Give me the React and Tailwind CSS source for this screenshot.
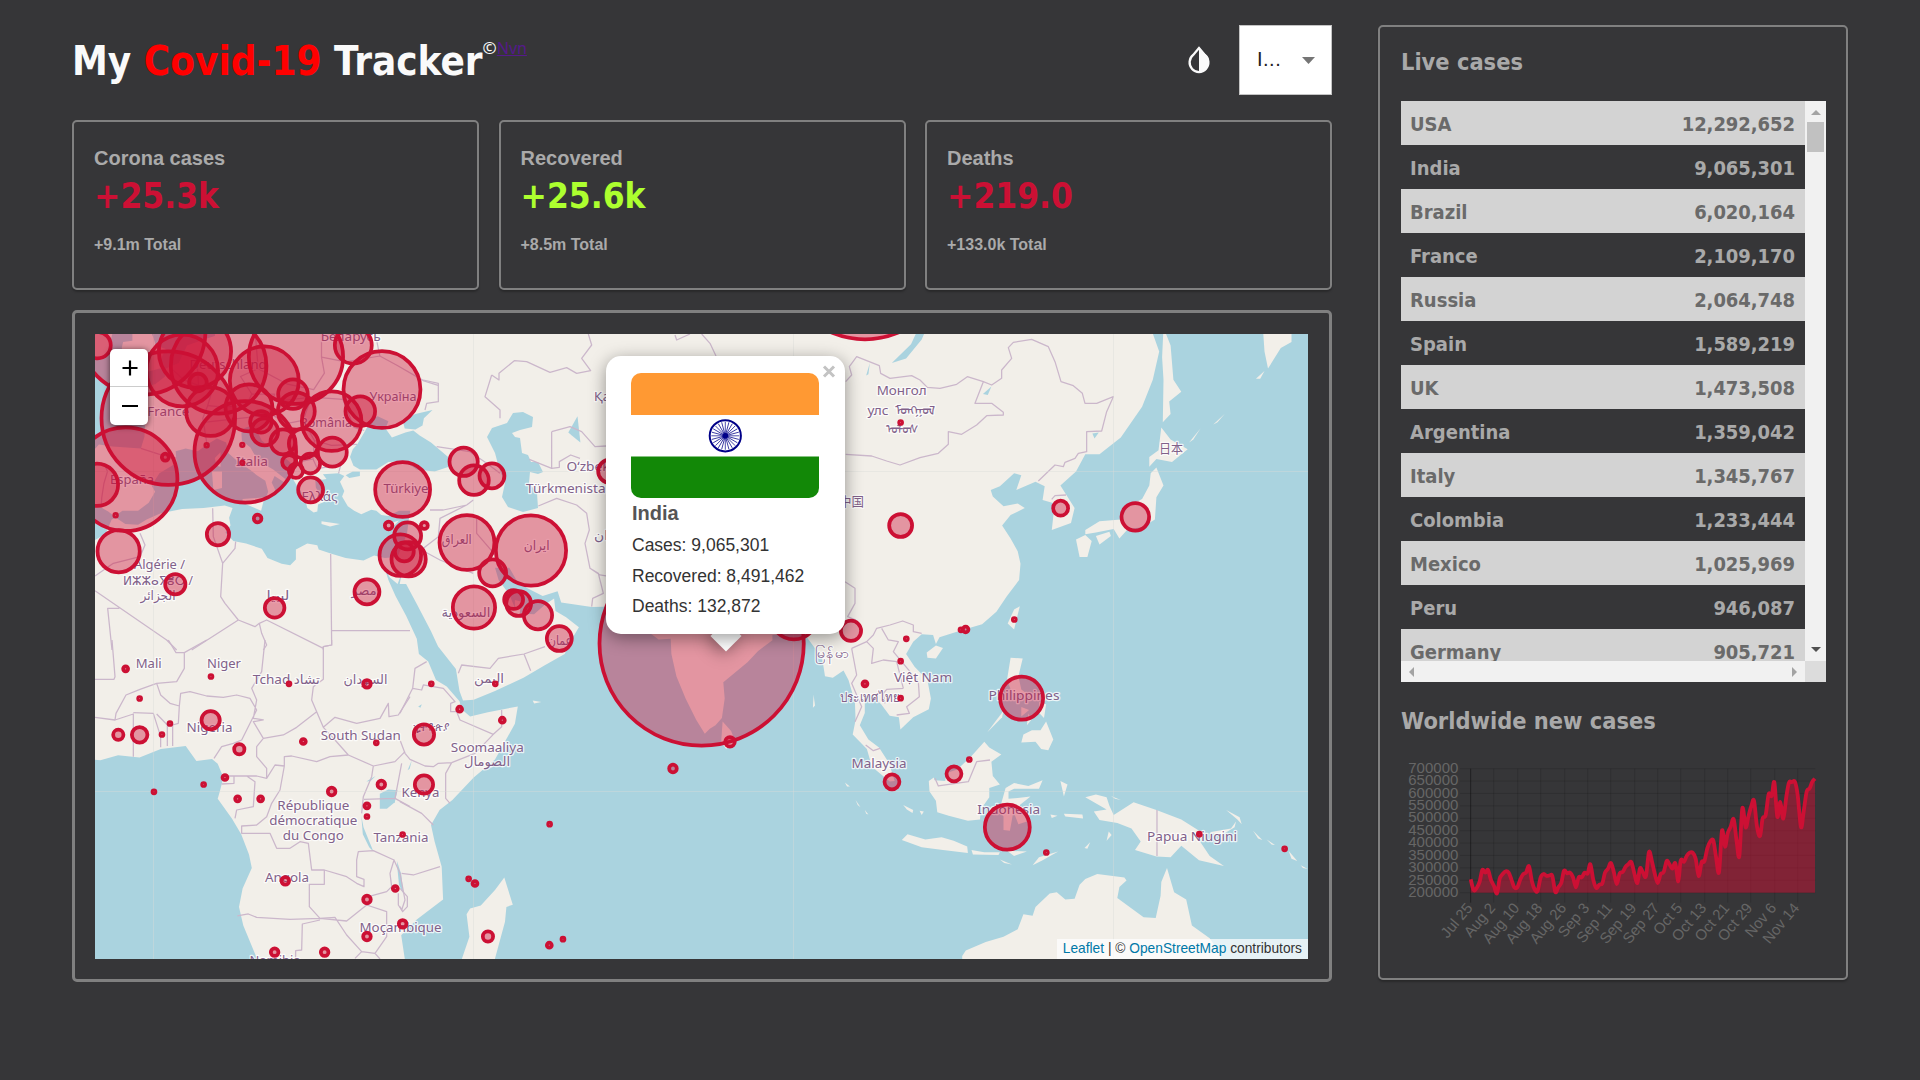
import React from "react";

/* ---------- map projection (web mercator, 320px tiles) ---------- */
const px = (lon) => 153.7 + 7.1111 * lon;
const py = (lat) => 791.6 - 407.44 * Math.log(Math.tan(Math.PI / 4 + (lat * Math.PI) / 360));

const geoPath = (s, close = true) =>
  s
    .trim()
    .split(/\s+/)
    .map((p, i) => {
      const [lon, lat] = p.split(",").map(Number);
      return (i ? "L" : "M") + px(lon).toFixed(1) + " " + py(lat).toFixed(1);
    })
    .join("") + (close ? "Z" : "");

const WATER = [
  // Atlantic, Biscay, Channel, North Sea
  "-12,56 -12,43.1 -9,43.1 -8.2,43.4 -7.7,43.8 -5.8,43.6 -3.8,43.5 -1.8,43.4 -1.3,44.6 -1.2,46.1 -2.5,47.3 -4.7,47.9 -4.7,48.5 -3,48.8 -1.6,48.7 -1.8,49.7 -1.2,49.4 0.2,49.6 1.6,50.3 1.7,51 3.5,51.5 4.7,53 7,53.5 8.6,53.8 8.8,56",
  // Gulf of Cadiz
  "-12,37 -9,37.1 -7.5,37.1 -6.4,36.6 -5.4,36 -5.3,35.9 -5.9,35.7 -6.8,34 -8.5,33.2 -12,33",
  // Mediterranean
  "-5.6,36 -4.4,36.7 -2.2,36.7 -0.7,37.6 0.2,38.8 -0.3,39.5 0.8,40.8 3.2,41.9 3.1,43.1 4.5,43.4 6.2,43.1 7.5,43.8 8.9,44.4 10.2,44 10.5,42.9 12.2,41.8 13.5,41.2 14.5,40.6 15.7,40 16.1,38.8 15.7,38 16.5,38.4 17.1,39 16.6,39.8 17,40.5 18.4,39.8 18.5,40.2 16.8,41.2 15.9,41.6 16.1,41.9 14.7,42.1 13.6,43.5 12.4,44.2 12.3,45.3 13.7,45.7 13.6,45 14.5,45.2 15.2,44.2 16.5,43.4 18.5,42.4 19.4,41.8 19.4,40.4 20.2,39.4 21.2,38.3 21.6,37 22.5,36.5 23,36.6 23.1,37.4 24,37.7 23.1,38.8 22.8,39.3 22.7,40.4 23.7,40.1 24.3,40.2 23.8,40.7 26,40.8 26.8,40.5 26.2,39.9 26.8,38.9 26.5,38.3 27.3,37.2 28.2,36.7 29.2,36.3 30.6,36.8 31.3,36.7 32,36.2 33,36.1 34.5,36.7 36.1,36.7 35.9,35.8 35.6,34 35,32.8 34.3,31.3 32.5,31.2 31,31.5 29.5,30.9 27,31.2 25,31.7 23.2,32.2 23,32.7 21.6,32.9 20,32.2 20,31 19.2,30.3 18,30.5 16,31.2 15.2,32.3 13,32.9 11.2,33.2 10.1,34.2 10.8,35 10.6,35.9 11.1,37 10,37.3 7,37 4,36.9 1,36.4 -1,35.7 -2.2,35.1 -4,35.2 -5.3,35.9",
  // Black Sea, Azov, Marmara
  "28.1,41.6 27.6,42.5 28,43.3 28.6,43.8 29.6,45 30.7,46.4 31.5,46.6 33,46.1 32.6,45.4 33.5,44.5 35.4,45 36.5,45.2 37.4,44.7 39,44 41.4,42.5 41.5,41.5 39.5,41 37,41.2 36,41.7 35,42.1 33,42 31.3,41.2 29,41.2",
  "35,46.2 36.8,46.8 39.2,47.2 38,46.4 37.8,45.7 36.8,45.3 35.3,45.4",
  "27,40.6 28,41 29,41 29,40.5 27.5,40.3",
  // Gulf of Guinea and South Atlantic
  "-12,4.9 -9,4.7 -8.3,4.5 -7.5,4.4 -5,5.1 -2,4.8 1,6 4.5,6.4 6,4.3 8.2,4.6 9,3.9 9.8,2 9.3,0 9,-1 11,-3.8 12.3,-6 13.4,-8.8 13.8,-10.7 12.5,-13.5 12,-16 12.6,-18.5 14.5,-22.8 15,-27 -12,-27",
  // Indian and Pacific Oceans with the Red Sea and the Gulf
  "32.5,29.9 33,28.5 34,26.5 35.5,24 37,21 37.3,19 38.6,18 39.7,15.5 41.2,14.6 43,12.6 43.3,11.5 44.5,10.5 47,11.1 51.2,11.9 50.8,9.5 48,4.5 45,2 42,-1.2 40.2,-2.6 39,-4.7 39.5,-7 40.5,-10.5 40.7,-15 37,-17.7 34.8,-19.8 35.5,-24 35,-40 165,-40 165,56 139,56 140.5,54 141.4,52.5 140.5,50 139,47.5 136,44.5 133,42.8 131,42.8 129.7,41 127.5,39.5 129.5,37 129,35.3 126.3,34.5 126.7,37.5 125,37.9 125.3,39.4 124,39.9 121.3,39 122,40.6 121,40.8 119,39.4 117.7,39 118,38.3 119.5,37.2 121.5,37.5 122.5,37 120.5,36.2 119.3,35 120.5,33.5 121.5,32 121.9,30.5 121.7,28.5 120,26.5 118.5,24.5 116.5,22.9 113.5,22.1 110.5,21.2 110,20.3 109.6,21.5 108,21.6 106.8,20.6 105.8,19 107,17.3 108.8,15.5 109.3,13 109,11.5 106.8,10.4 105,8.7 104.8,10.4 103.5,10.6 102.3,12.2 101,13.4 100,13.3 100,11 99.3,9.3 100.5,7.3 102,6.2 103.4,4 104.2,1.5 103.5,1.4 101,3.5 100.3,6 98.3,8 98.7,10 98.6,12.5 97.7,15.5 97,16.8 95.5,15.8 94.4,16 94,18.5 92,21 91,22.5 89,21.7 87,21.5 87,20.8 85,19.4 83.5,17.9 81.5,16.3 80.1,15.2 80.3,13 79.9,10.3 79,9.3 78.2,8.8 77.5,8.1 76.3,10 74.8,13 73.5,16 72.8,19 72.7,21 71,20.9 69,22.3 67.5,24 66.6,25.2 61.6,25.1 57.3,25.7 56.8,27.1 54.7,26.5 52.5,27.5 51,28.5 50,30 48,30 48.5,28.5 50,26.7 50.8,25 50.8,26 51.6,25.8 51.5,24.3 53.5,24.2 55,25.4 56.3,26.2 56.5,24.6 58,23.8 59.8,22.5 58.7,20.8 57.8,19 55,17.5 52,15.8 48,14 45,12.8 43.5,12.7 43,14 42.5,17 40,20 39,22 37,25.5 35.5,28 34.6,28 34.9,29.4 34.3,28 33.2,28.8",
];

const LAND = [
  "-5.7,50.1 -3.6,50.3 -1,50.7 1.4,51.1 0.7,51.5 1.7,52.7 0.3,53 0,53.6 -0.5,54.3 -3,55 -3,53.9 -3,53.4 -4.3,53.3 -4.5,52.8 -4.1,52.3 -5.2,51.8 -3,51.4 -4.5,51",
  "-9,55 -9,51.5 -8,51.8 -6.4,52.2 -6,53.5 -5.6,54.6",
  "12.5,38 15.6,38.2 15.1,36.7 12.5,37.6",
  "8.2,41 9.6,41 9.6,39.2 8.4,39",
  "8.6,42.4 9.4,43 9.4,41.5 8.8,41.6",
  "23.6,35.5 26.2,35.2 24.8,34.9 23.6,35.2",
  "32.3,35 34.5,35.6 33.7,34.9 32.5,34.7",
  "2.4,39.6 3.4,39.8 3.1,39.3",
  "49.3,-12 50.5,-15.7 49.6,-16 49.4,-18 47.5,-24.5 45,-25.5 43.3,-23 44.4,-20 44,-17 44.5,-16.2 46,-15.8 48,-13.7",
  "80,9.8 81.2,8.5 81.8,7 80.5,6 79.8,7",
  "105.2,-6.8 106,-6 108.5,-6.7 110.8,-6.4 112.5,-6.9 114.4,-7.7 114.5,-8.6 111,-8.2 108,-7.8",
  "109,1.5 109.7,2 109.8,1.6 111.3,1.5 111.5,2.6 113,3.1 115,5 116.8,7 117.5,6.2 119.2,5.2 117.8,4.2 118,2.2 119,1 117.5,0.5 117.5,-0.8 116.3,-2.5 116.2,-3.9 114.5,-4.1 111.8,-3.4 110.2,-2.9 110,-1.3 109.1,0",
  "119.8,0.5 121,1.2 123,0.8 125,1.6 124.5,0.4 121,0.4 120.2,0 120.2,-1 121.5,-0.9 123.3,-0.7 121.8,-1.9 122.8,-4.2 121.6,-4.6 120.9,-2.8 120.4,-5.5 119.5,-5.4 119.5,-3.5 118.9,-2.7",
  "131,-0.8 132.5,-0.4 134,-0.8 134.4,-2 135,-3.3 137.8,-1.5 141,-2.6 144.5,-3.9 147.8,-6 147,-6.8 148.5,-9 150.5,-10.4 147,-9.6 144.5,-7.6 143,-9.2 141,-9.1 138,-8.2 138.8,-7 137.5,-5.2 135.5,-4.4 133,-4 132.2,-2.8 134,-2.5",
  "148.5,-5.7 150,-6.2 152,-5 152.2,-4.2 151.5,-5.2",
  "150.8,-2.6 152.7,-3.6 153,-4.6 152.4,-3.9",
  "154.6,-5.5 155.9,-6.8 155.3,-6.6",
  "156.5,-6.7 157.7,-7.5 157.2,-7.4",
  "159.6,-8.3 160.8,-9.7 160,-9.4",
  "161.3,-10.3 162.3,-10.8 161.6,-10.7",
  "113.7,-22.5 114.2,-21.8 117,-20.7 119.5,-20 121.5,-19 122.3,-17 123.6,-17.2 124,-16 126,-14.2 127,-14 128.2,-15 129.5,-14.9 130.2,-13 131,-12.2 132.7,-11.5 136.5,-12 136.8,-12.4 135.8,-13.3 135.5,-14.8 139.2,-17.4 140.9,-17.5 141.6,-14.5 141.7,-12.6 142.5,-10.7 143.5,-14 145.2,-15 146,-18.5 148.5,-20.2 150,-22.3 150,-24 113.7,-24",
  "120.5,18.5 122.2,18.4 121.6,16 122,14.2 124,12.8 122.5,13.6 120.7,13.8 120,15.5",
  "122,6.9 122.3,8 123.5,8.6 124.7,8.6 125.5,9.8 126.5,7.3 125.8,5.8 124.8,6 124,7",
  "117.2,8.3 119.5,11.3 119.3,10.4",
  "122,11.8 123.1,11.4 122,10.5",
  "124.5,12.5 125.5,12.2 125.2,10.3 124.6,10.9",
  "123,10.9 123.4,10 122.8,9.3",
  "120.1,23 121,24.8 121.8,25.2 121,22.2",
  "108.7,19.2 110,20.1 111,19.8 110,18.4 108.8,18.5",
  "141.7,45.5 143,44.3 145.4,43.3 143.2,42 141,42.3 140,41.5 140,42.5 141.3,43.2",
  "141,41.4 142,39.5 141,38.2 140.8,35.7 139,34.8 137,34.6 135.8,33.5 135,34.6 132.5,34.2 131,34 131,34.5 133,35.5 136,35.7 137,37.2 139,38 140,39.5 140.2,40.8",
  "132.5,33.8 134.4,34.3 134.6,33.8 133,32.8",
  "129.7,33.4 131,33.9 131.9,33.2 131.3,31.3 130.2,31.3",
  "142,54.5 143,53 143.4,50 144.5,48.9 142.8,48 143,46.8 141.9,46 142,50 141.8,52",
  "155.8,56 156.2,52.5 156.7,51 158.5,52.8 160,53.3 160,56",
  "145.6,44 147.2,45.4 146.2,44.3",
  "149,45.8 150.6,46.8 149.6,46",
  "155,50.1 156.2,50.8 155.6,50.1",
  "115,-8.2 116.8,-8.5 119,-8.5 118.8,-8.9 115.2,-8.8",
  "120,-8.3 122.8,-8.4 121,-9",
  "119,-9.5 120.7,-10.2 119.6,-10",
  "123.6,-10.3 124.5,-9.2 127.2,-8.4 125,-9.6",
  "127.5,1.5 128.5,1 128,-0.7",
  "126.1,-3.2 127.1,-3.4 126.3,-3.7",
  "128,-3.1 130.6,-3.2 130.7,-3.8 128.2,-3.5",
  "134.3,-5.6 134.7,-6.1 134,-6.9",
  "130.9,-7.9 131.7,-7.1 131.3,-8",
  "105.4,-1.9 106.8,-2.6 106.7,-3 105.9,-2.5",
  "107.7,-2.7 108.3,-2.8 108,-3.3",
  "98.7,-1.2 99.4,-2.2 99,-1.9",
  "97.2,1.3 97.9,0.7 97.5,0.7",
  "100,-2.6 100.5,-3.2 100.2,-3.1",
  "92.8,13.5 93,12 92.7,11.7",
  "53.3,12.7 54.5,12.5 53.5,12.3",
  "134.6,-0.6 136,-1.2 135.2,-1",
];

const LAKES = [
  "31.8,-0.3 33,0.3 34.3,0.2 33.9,-1.5 32.8,-2.4 31.8,-2.4",
  "29.2,-3.4 29.5,-5 30.9,-8.4 30.3,-7.8 29.4,-6",
  "34.2,-9.7 34.8,-11.5 35.1,-14.2 34.5,-13 34.3,-11",
  "29.9,1.4 31.2,2.2 30.5,1.5",
  "35.7,3 36.3,4.4 36,3.2",
  "103.8,51.5 105.8,51.9 108,53.5 109.8,56 108.8,56 106.5,53.1",
  "58.3,45 59.6,46.6 60,44 58.8,44.7",
  "132,44.9 132.9,45 132.3,44.4",
  "100.2,50.4 100.7,51.5 100.5,50.5",
  "116.6,48.7 117.8,49.4 117.3,48.6",
  "73.5,45 75,46.7 78.8,46.6 75,46.1",
  "37.2,11.9 37.7,12.2 37.5,11.7",
];

const EUROPE_BORDERS = [
  "-1.8,43.4 0.7,42.8 3.2,42.4",
  "-7,41.9 -6.5,41 -7,39.7 -7.3,38.2 -7.4,37.2",
  "2.5,51 4.2,50 6.3,49.5 8.2,49 7.6,47.6 6.9,46.4 7.5,43.8",
  "6,51.8 6.2,50.7 6.3,49.5",
  "14.3,53.9 14.7,51 12.2,50.3 13.8,48.7 13,47.6 9.6,47.5 7.6,47.6",
  "14.7,51 18.8,49.6 22.5,49.1 24,50.6 23.6,52 23.6,54",
  "13.8,48.7 17,48.7 16.2,46.9 13.7,46.5 7,46",
  "17,48 22.2,48.4 21,46.2 18.8,45.9 16.2,46.9",
  "22.2,48.4 26.6,48.2 28.2,45.5 29.6,45.2",
  "22.6,44.2 25,43.7 28.6,43.8",
  "21,46.2 22.6,44.2 22.4,42.3 20.5,42 19.4,41.8",
  "22.4,42.3 23,41.3 26.3,41.7 26,40.8",
  "23.6,52 27,51.6 31.8,52.1 34.2,51.3 38,49.9 40,49.5",
  "31,54.5 31.8,52.1",
];

// Borders digitised at three units per map pixel, per survey sheet.
const SHEETS = [
  {
    at: "translate(90 640) scale(.33333)",
    d: "M66 0 75 110 72 118 15 118M283 38 283 85 260 125 200 130 150 148 108 165 78 220 75 240 15 232M283 38 258 38 235 0M283 38 350 0M200 130 212 165 240 190 268 198 265 250 248 255 248 318M75 240 130 222 130 350M130 218 190 220 212 290 212 322M200 222 232 255 232 318M268 198 272 160 300 155 350 168 400 172 440 165 480 175 500 210 470 270 455 300 430 310 395 320 372 355M525 0 515 95 485 145 500 180 490 235 520 240 490 245 520 295 580 285 620 262 680 215 665 180 670 140 700 118 700 20 725 15 725 0M520 295 500 320 500 350 530 385 530 415 500 408 395 408M395 432 432 430 432 408M470 408 495 425 490 500 440 510 435 535M530 415 555 375 583 378 583 350 605 348 680 365 720 350 775 345M680 215 700 262 735 232 800 250 870 235 895 190 897 230 925 225 960 170M583 378 570 450 545 490 530 530 500 555 455 558 455 580 540 580 560 625 600 625 630 605 655 610 665 690 703 690 703 733 658 733 658 800 690 835 770 843 830 795 890 815 890 890 855 940 815 935M700 262 735 300 775 345 850 378 915 365 945 335M850 378 845 410 820 470 815 520M822 478 915 475 935 370M915 475 960 500M703 690 770 710 800 730 822 740 822 718 800 710 800 660 805 635 850 632 912 660 900 700 905 740 890 755 835 770M912 660 930 700 945 780 935 810 925 795 925 760M442 828 475 822 500 832 600 838 690 835 735 832 770 885 815 935 795 955M690 840 637 852 635 930 617 932 617 957M855 940 870 957",
  },
  {
    at: "translate(90 330) scale(.33333)",
    d: "M15 738 70 700 150 680 165 645 150 610M15 782 230 930 260 960M66 960 53 835 88 835M305 960 445 870 495 890 508 880 515 910 530 945 520 960M445 870 405 820 392 800 398 700 370 620 368 535M398 700 435 655 437 635M508 880 530 870 700 955M722 672 725 945 700 950 700 960M725 902 960 902",
  },
  {
    at: "translate(400 330) scale(.33333)",
    d: "M275 135 255 200 300 240 300 265M275 135 297 150 297 130 343 92 380 95 450 127 500 113 530 130 572 122 545 85 575 45 565 12M455 305 455 415 388 388M455 305 510 290 545 305 585 350 618 348M455 415 478 412 478 395 512 375 540 385M415 528 470 505 530 525 560 550 568 600 555 640 570 715 600 735 618 738M570 715 595 730 610 790 578 805 575 830M70 150 115 160 115 215 80 220 75 240M110 350 210 365 260 400 300 430M70 655 115 620 120 565 200 525 220 510M90 540 130 540 200 525M230 560 230 610 290 680 310 700M65 660 120 690 220 730M905 12 930 40 948 78M825 15 830 30 870 12",
  },
  {
    at: "translate(400 640) scale(.33333)",
    d: "M80 65 45 85 38 145 0 220M38 145 65 150 70 135 130 145 165 185 152 190 152 215 170 215 180 240 280 283 305 260 305 210M280 283 225 340 155 368 115 370 100 380 75 378 30 358 15 340 0 300M155 368 137 400 137 475 150 490M0 485 65 520 100 555M5 700 40 705 120 680M0 745 22 770 22 800 8 815 0 800M175 100 185 75 270 85 295 55 372 42 435 20M372 42 392 92",
  },
  {
    at: "translate(700 560) scale(.33333)",
    d: "M435 65 465 85 465 130 443 170 468 180M455 265 500 245 520 225 530 205 570 195 608 183 640 195 640 215 665 220M455 265 470 345 455 370 485 440 465 485M500 245 520 265 515 310 550 300 590 305 610 385M545 205 565 240 595 245 580 275 655 365 658 410 620 440 628 460 590 465M610 385 560 388 550 400 555 430M497 555 520 572 540 565M705 655 715 678 805 665 830 605 870 600M1371 750 1371 888",
  },
  {
    at: "translate(840 325) scale(.33333)",
    d: "M17 170 35 150 28 125 50 95 118 122 122 145 150 160 215 152 240 165 262 187 300 190 350 178 382 155 430 170 455 180 485 160 485 135 515 100 505 68 520 52 575 43 625 65 645 110 663 170 700 182 727 205 735 235 770 235 820 215 800 260 785 318 740 320 740 380 715 385 705 400 675 412 670 425 645 420 595 468M430 170 405 235 455 235 490 262 490 270 440 272 410 300 365 328 325 320 325 358 295 385 240 398 180 420 140 408 95 393 17 388M635 523 645 512 678 510",
  },
];

// label, centre x, baseline y, width
const LABELS = [
  ["France", 168.3, 416, 42], ["España", 132, 484, 44], ["Deutschland", 228, 369, 77],
  ["Беларусь", 350.7, 341, 60], ["Україна", 393, 401, 47], ["România", 326, 427, 52],
  ["Italia", 252, 466, 32], ["Ελλάς", 319.5, 501, 36], ["Türkiye", 406, 493, 45],
  ["Algérie /", 159.5, 569, 51], ["ⵍⵣⵣⴰⵢⴻⵔ /", 158, 585, 70], ["الجزائر", 158, 600, 35],
  ["ليبيا", 278, 600, 23], ["مصر", 364, 595, 25], ["Қазақстан", 626, 401, 64],
  ["Oʻzbekiston", 604, 471, 75], ["Türkmenistan", 570, 493, 88], ["ایران", 536.7, 550, 26],
  ["العراق", 456.7, 544, 30], ["السعودية", 466, 617, 49], ["عمان", 560, 645, 24],
  ["ان", 601, 540, 14], ["Mali", 148.7, 667.5, 26], ["Niger", 224, 668, 34],
  ["Tchad تشاد", 286.3, 684, 67], ["السودان", 365.5, 684, 44], ["Nigeria", 209.5, 731.5, 46],
  ["South Sudan", 360.7, 740, 80], ["République", 313.3, 810, 72], ["démocratique", 313.3, 825, 88],
  ["du Congo", 313.3, 840, 61], ["Tanzania", 401, 841.5, 55], ["Angola", 287, 882, 44],
  ["Moçambique", 400.5, 932, 82], ["Namibia", 275, 965, 51], ["Kenya", 420.5, 797, 38],
  ["Soomaaliya", 487.3, 751.5, 73], ["الصومال", 487, 766, 46], ["ኢትዮጵያ", 431, 731, 38],
  ["اليمن", 489, 683, 30], ["မြန်မာ", 832.5, 658, 35], ["Việt Nam", 923, 682, 58],
  ["ประเทศไทย", 870, 702, 60], ["Malaysia", 879, 768, 55], ["Philippines", 1024, 700, 71],
  ["Indonesia", 1008.7, 814, 63], ["Papua Niugini", 1192, 841, 90], ["日本", 1171, 453, 24],
  ["Монгол", 901.7, 395, 50], ["улс", 878, 415, 21], ["ᠮᠣᠩᠭᠣᠯ", 915, 415, 41],
  ["ᠤᠯᠤᠰ", 902, 434, 32], ["中国", 851.5, 506, 25],
];

// sheet origin, then [x, y, outer radius] in thirds of a pixel
const CASES = [
  [90, 330, [
    [22, 45, 45], [155, 3, 196], [234, 264, 206], [106, 447, 161], [20, 464, 69], [465, 365, 158],
    [617, 80, 147], [385, 107, 149], [314, 64, 114], [276, 121, 113], [323, 157, 32], [361, 244, 79],
    [522, 152, 109], [476, 233, 76], [608, 192, 50], [618, 243, 61], [512, 275, 38], [523, 305, 46],
    [578, 335, 43], [640, 340, 50], [597, 396, 27], [617, 422, 27], [660, 400, 35], [726, 366, 49],
    [724, 273, 95], [810, 243, 50], [875, 178, 121], [789, 45, 61], [225, 381, 16], [349, 345, 9],
    [456, 344, 9], [456, 398, 9], [76, 555, 9], [661, 479, 43], [502, 565, 17], [383, 612, 39],
    [85, 663, 69], [255, 762, 36], [553, 833, 35], [830, 785, 43], [937, 478, 88], [895, 586, 17],
  ]],
  [400, 330, [
    [22, 617, 46], [0, 675, 68], [12, 665, 34], [25, 687, 57], [72, 586, 16], [190, 395, 48],
    [221, 450, 50], [275, 437, 43], [200, 637, 88], [392, 661, 111], [277, 728, 46], [221, 832, 69],
    [340, 808, 34], [355, 820, 43], [413, 855, 48], [477, 925, 43], [628, 423, 40],
  ]],
  [90, 640, [
    [106, 86, 13], [362, 109, 10], [148, 175, 10], [596, 131, 10], [830, 131, 17], [84, 284, 21],
    [148, 284, 29], [215, 283, 10], [239, 250, 10], [361, 240, 33], [447, 327, 21], [639, 304, 13],
    [858, 308, 10], [404, 412, 13], [340, 433, 10], [191, 455, 10], [442, 476, 13], [511, 476, 13],
    [724, 454, 17], [873, 433, 17], [830, 497, 13], [830, 529, 10], [937, 583, 10], [585, 722, 17],
    [915, 745, 13], [830, 778, 17], [937, 851, 17], [830, 889, 17], [553, 936, 17], [703, 936, 17],
  ]],
  [400, 640, [
    [93, 131, 10], [285, 131, 10], [178, 207, 13], [306, 240, 13], [71, 283, 36], [71, 433, 33],
    [448, 552, 10], [205, 716, 10], [224, 730, 13], [263, 889, 21], [447, 915, 13], [488, 897, 10],
    [818, 385, 17], [904, 10, 312],
  ]],
  [700, 560, [
    [281, 167, 76], [452, 212, 36], [618, 236, 10], [601, 303, 10], [494, 371, 13], [601, 414, 10],
    [782, 209, 10], [796, 208, 14], [942, 178, 10], [964, 414, 70], [89, 545, 20], [575, 665, 28],
    [761, 641, 28], [807, 598, 10], [921, 801, 73], [1038, 877, 10], [1497, 822, 10], [1753, 866, 10],
  ]],
  [840, 325, [[181, 292, 10], [181, 601, 40], [661, 549, 28], [885, 575, 47], [74, -213, 261]]],
];

function WorldMap() {
  return (
    <svg className="block" width="1213" height="625" viewBox="95 334 1213 625">
      <rect x="95" y="334" width="1213" height="625" fill="#f2efe9" />
      <g fill="#aad3df">
        {WATER.map((w, i) => <path key={i} d={geoPath(w)} />)}
        <path d="M513 413 523 412 533 417 532 427 520 430 512 433 515 437 520 438 522 453 528 455 531 462 538 462 543 472 538 474 530 472 529 483 537 493 538 508 523 512 508 507 502 497 505 483 499 468 495 453 487 437 492 428 507 423Z" />
      </g>
      <g fill="#f2efe9">{LAND.map((l, i) => <path key={i} d={geoPath(l)} />)}</g>
      <g fill="#aad3df">{LAKES.map((l, i) => <path key={i} d={geoPath(l)} />)}</g>
      <g fill="none" stroke="#cbb7cb" strokeLinejoin="round">
        {SHEETS.map((s) => <path key={s.at} d={s.d} transform={s.at} strokeWidth="3.8" />)}
        {EUROPE_BORDERS.map((b, i) => <path key={i} d={geoPath(b, false)} strokeWidth="1.25" />)}
      </g>
      <path d="M153.5 334V959M473.5 334V959M793.5 334V959M1113.5 334V959M95 471.5H1308M95 791.5H1308" stroke="#d9dcd8" strokeOpacity=".4" />
      <g
        className="[font-family:'Noto_Sans','DejaVu_Sans','Noto_Sans_CJK_SC',sans-serif] text-[13px]"
        fill="#81618a"
        stroke="#fff"
        strokeOpacity=".75"
        strokeWidth="2.5"
        strokeLinejoin="round"
        paintOrder="stroke"
        textAnchor="middle"
      >
        {LABELS.map(([t, x, y, w]) => (
          <text key={t} x={x} y={y} textLength={w} lengthAdjust="spacingAndGlyphs">{t}</text>
        ))}
      </g>
      <g fill="#cc1034" fillOpacity=".4" stroke="#cc1034" strokeWidth="3.75">
        {CASES.map(([ox, oy, list]) =>
          list.map(([x, y, r]) => (
            <circle key={ox + "-" + x + "-" + y} cx={ox + x / 3 + 0.3} cy={oy + y / 3 + 0.2} r={Math.max(r / 3 - 1.87, 1.3)} />
          ))
        )}
      </g>
    </svg>
  );
}

function IndiaFlag() {
  return (
    <svg className="block rounded-[10px]" width="188" height="125" viewBox="0 0 188 125">
      <rect width="188" height="125" fill="#fff" />
      <rect width="188" height="42" fill="#f93" />
      <rect y="83.5" width="188" height="41.5" fill="#128807" />
      <g transform="translate(94.3 62.8)" stroke="#000088" fill="none">
        <circle r="15.6" strokeWidth="2" />
        {Array.from({ length: 24 }, (_, i) => (
          <path key={i} d="M0 0V-14" strokeWidth=".7" transform={`rotate(${i * 15})`} />
        ))}
        <circle r="2.8" fill="#000088" stroke="none" />
      </g>
    </svg>
  );
}

function Popup() {
  return (
    <div className="absolute left-[511px] top-[22px] h-[278px] w-[239px]">
      <div className="absolute left-[109px] top-[268.5px] h-[22px] w-[22px] rotate-45 bg-white shadow-[0_4px_17px_rgba(0,0,0,0.4)]" />
      <div className="relative h-full rounded-[15px] bg-white pl-[25px] pt-[17px] shadow-[0_4px_17px_rgba(0,0,0,0.4)]">
        <IndiaFlag />
        <div className="mt-[4px] pl-px text-[20px] font-bold leading-[23px] text-[#555]">India</div>
        <div className="mt-[8px] pl-px text-[17.5px] leading-[24px] text-[#333]">Cases: 9,065,301</div>
        <div className="mt-[7px] pl-px text-[17.5px] leading-[24px] text-[#333]">Recovered: 8,491,462</div>
        <div className="mt-[6px] pl-px text-[17.5px] leading-[24px] text-[#333]">Deaths: 132,872</div>
        <svg className="absolute right-[9px] top-[9px]" width="14" height="13" viewBox="0 0 14 13">
          <path d="M2 1.5 12 11.5M12 1.5 2 11.5" stroke="#c3c3c3" strokeWidth="3" />
        </svg>
      </div>
    </div>
  );
}

function ZoomControl() {
  return (
    <div className="absolute left-[15px] top-[15px] flex h-[76px] w-[38px] flex-col rounded-[5px] bg-white shadow-[0_1px_6px_rgba(0,0,0,0.65)]">
      <div className="flex h-[38px] items-center justify-center border-b border-[#ccc] pl-[2px]">
        <svg width="16" height="16" viewBox="0 0 16 16"><path d="M8 .5V15.5M.5 8H15.5" stroke="#000" strokeWidth="2.2" /></svg>
      </div>
      <div className="flex h-[38px] items-center justify-center pl-[2px]">
        <svg width="16" height="16" viewBox="0 0 16 16"><path d="M0 8H16" stroke="#000" strokeWidth="2" /></svg>
      </div>
    </div>
  );
}

const STATS = [
  { title: "Corona cases", value: "+25.3k", total: "+9.1m Total", color: "text-[#cc1034]" },
  { title: "Recovered", value: "+25.6k", total: "+8.5m Total", color: "text-[#adff2f]" },
  { title: "Deaths", value: "+219.0", total: "+133.0k Total", color: "text-[#cc1034]" },
];

function StatCard({ title, value, total, color }) {
  return (
    <div className="h-[170px] w-[407px] shrink-0 rounded-[5px] border-2 border-[#808080] pl-[20px] pt-[24px] font-bold text-[#aaa] shadow-[0_2px_2px_rgba(0,0,0,0.25)]">
      <div className="text-[20px] leading-[24px]">{title}</div>
      <div className={`[font-family:'DejaVu_Sans_Condensed','DejaVu_Sans',sans-serif] text-[35px] leading-[44px] mt-[4px] ${color}`}>{value}</div>
      <div className="mt-[17px] text-[16px] leading-[20px]">{total}</div>
    </div>
  );
}

const COUNTRIES = [
  ["USA", "12,292,652"], ["India", "9,065,301"], ["Brazil", "6,020,164"], ["France", "2,109,170"],
  ["Russia", "2,064,748"], ["Spain", "1,589,219"], ["UK", "1,473,508"], ["Argentina", "1,359,042"],
  ["Italy", "1,345,767"], ["Colombia", "1,233,444"], ["Mexico", "1,025,969"], ["Peru", "946,087"],
  ["Germany", "905,721"],
];

function CountryTable() {
  return (
    <div className="grid h-[581px] w-[425px] grid-cols-[404px_21px] grid-rows-[560px_21px]">
      <div className="overflow-hidden [font-family:'DejaVu_Sans_Condensed','DejaVu_Sans',sans-serif] text-[20px] font-bold">
        {COUNTRIES.map(([name, cases], i) => (
          <div
            key={name}
            className={
              "flex h-[44px] items-center justify-between pl-[9px] pr-[10px] pt-[2px] " +
              (i % 2 ? "text-[#a9a9a9]" : "bg-[#d3d3d3] text-[#6a6a6a]")
            }
          >
            <span>{name}</span>
            <span className="tracking-[-0.05px]">{cases}</span>
          </div>
        ))}
      </div>
      <div className="flex flex-col items-center justify-between bg-[#f1f1f1] pb-[9px] pt-[9px]">
        <div className="flex flex-col items-center">
          <svg width="10" height="5" viewBox="0 0 10 5"><path d="M0 5 5 0 10 5Z" fill="#a3a3a3" /></svg>
          <div className="mt-[7px] h-[30px] w-[17px] bg-[#c1c1c1]" />
        </div>
        <svg width="10" height="5" viewBox="0 0 10 5"><path d="M0 0 5 5 10 0Z" fill="#505050" /></svg>
      </div>
      <div className="flex items-center justify-between bg-[#f1f1f1] px-[8px]">
        <svg width="5" height="10" viewBox="0 0 5 10"><path d="M5 0 0 5 5 10Z" fill="#a3a3a3" /></svg>
        <svg width="5" height="10" viewBox="0 0 5 10"><path d="M0 0 5 5 0 10Z" fill="#a3a3a3" /></svg>
      </div>
      <div className="bg-[#dcdcdc]" />
    </div>
  );
}

const X_LABELS = ["Jul 25", "Aug 2", "Aug 10", "Aug 18", "Aug 26", "Sep 3", "Sep 11", "Sep 19", "Sep 27", "Oct 5", "Oct 13", "Oct 21", "Oct 29", "Nov 6", "Nov 14"];
const X_POS = [302, 370, 442, 511, 583, 652, 721, 793, 862, 931, 1003, 1072, 1141, 1213, 1282];
const Y_LABELS = ["700000", "650000", "600000", "550000", "500000", "450000", "400000", "350000", "300000", "250000", "200000"];
const SERIES = "302,838 311,870 320,864 329,845 337,810 346,818 354,810 363,840 372,858 381,880 389,836 398,822 407,814 416,818 424,838 433,862 442,862 451,838 460,822 468,818 477,799 486,845 495,870 503,872 512,832 521,822 530,828 539,826 547,828 556,876 565,862 574,848 582,812 591,820 600,818 609,832 618,862 626,832 635,832 644,818 653,820 661,793 670,840 679,864 688,854 697,850 705,818 714,806 723,789 732,818 740,852 749,820 758,816 767,800 775,793 784,786 793,820 802,849 810,805 819,818 828,828 837,756 846,785 854,820 863,849 872,822 881,816 890,783 898,792 907,806 916,790 925,844 932,782 942,785 950,768 959,758 968,758 977,776 986,828 995,786 1003,784 1012,745 1021,724 1030,722 1038,770 1047,817 1056,692 1065,740 1073,700 1082,680 1091,658 1100,725 1108,768 1117,625 1127,682 1135,650 1144,618 1152,602 1161,680 1170,708 1178,655 1187,645 1196,582 1205,588 1213,547 1222,650 1231,606 1240,656 1249,590 1257,548 1266,546 1275,546 1283,585 1293,681 1301,635 1310,575 1319,565 1327,545 1335,536";

function smooth(points) {
  const p = points.split(" ").map((s) => s.split(",").map(Number));
  let d = `M${p[0][0]} ${p[0][1]}`;
  for (let i = 0; i < p.length - 1; i++) {
    const a = p[Math.max(i - 1, 0)];
    const b = p[i];
    const c = p[i + 1];
    const e = p[Math.min(i + 2, p.length - 1)];
    d += `C${b[0] + (c[0] - a[0]) / 6} ${b[1] + (c[1] - a[1]) / 6} ${c[0] - (e[0] - b[0]) / 6} ${c[1] - (e[1] - b[1]) / 6} ${c[0]} ${c[1]}`;
  }
  return d;
}

function CasesChart() {
  const line = smooth(SERIES);
  return (
    <svg className="block" width="425" height="200" viewBox="93 465 1275 600">
      <g stroke="#000" strokeOpacity=".13" strokeWidth="3">
        {Y_LABELS.map((l, i) => <path key={l} d={`M270 ${506 + i * 37.2}H1336`} />)}
        {X_POS.slice(1).map((x) => <path key={x} d={`M${x + 1} 506V908`} />)}
      </g>
      <path d="M302 506V908" stroke="#000" strokeOpacity=".4" strokeWidth="3" />
      <path d={line + "L1335 878L302 878Z"} fill="#cc1034" fillOpacity=".5" />
      <path d={line} fill="none" stroke="#cc1034" strokeWidth="11.5" strokeLinejoin="round" />
      <g fill="#666" className="[font-family:'Liberation_Sans',sans-serif] text-[45px]">
        {Y_LABELS.map((l, i) => <text key={l} x="265" y={518 + i * 37.3} textAnchor="end">{l}</text>)}
        {X_LABELS.map((l, i) => (
          <text key={l} textAnchor="end" transform={`translate(${X_POS[i] + 8} 925) rotate(-50)`}>{l}</text>
        ))}
      </g>
    </svg>
  );
}

export default function App() {
  return (
    <div className="flex h-[1080px] w-[1920px] gap-[46px] overflow-hidden bg-[#363638] pl-[72px] pt-[25px] [font-family:'Liberation_Sans',sans-serif]">
      <main className="flex w-[1260px] flex-col">
        <header className="flex h-[70px] items-center justify-between">
          <h1 className="flex items-start whitespace-pre pt-px [font-family:'DejaVu_Sans_Condensed','DejaVu_Sans',sans-serif] text-[40px] font-bold leading-[54px] text-[#fafafa]">
            <span>My </span>
            <span className="text-[#f00]">Covid-19</span>
            <span> Tracker</span>
            <span className="[font-family:'Noto_Sans',sans-serif] text-[17px] font-normal leading-[28px]">©</span>
            <a className="[font-family:'Noto_Sans',sans-serif] text-[16px] font-normal leading-[28px] text-[#551a8b] underline">Nvn</a>
          </h1>
          <div className="flex items-center gap-[28px]">
            <svg width="24" height="30" viewBox="0 0 24 30">
              <path d="M12 4.6 6.2 11.4A9.4 9.6 0 1 0 17.8 11.4Z" fill="none" stroke="#fafafa" strokeWidth="2.3" transform="translate(0 -1.5)" />
              <path d="M12 2.2 18.4 9.2A9.6 9.8 0 0 1 12 26.5Z" fill="#fafafa" />
            </svg>
            <div className="flex h-[70px] w-[93px] items-center justify-between bg-white pl-[18px] pr-[17px] text-[20px] text-[#222] outline outline-1 -outline-offset-1 outline-[#c4c4c4]">
              <span className="-mt-[2px] tracking-[0.5px]">I...</span>
              <svg width="13" height="7" viewBox="0 0 13 7"><path d="M0 0H13L6.5 7Z" fill="#757575" /></svg>
            </div>
          </div>
        </header>
        <section className="mt-[25px] flex justify-between">
          {STATS.map((s) => <StatCard key={s.title} {...s} />)}
        </section>
        <section className="mt-[20px] h-[672px] rounded-[5px] border-[3px] border-[#808080] p-[20px] pt-[21px]">
          <div className="relative h-[625px] w-[1213px] overflow-hidden">
            <WorldMap />
            <Popup />
            <ZoomControl />
            <div className="absolute bottom-0 right-0 h-[20px] bg-white/70 px-[6px] text-[13.75px] leading-[19px] text-[#333]">
              <span className="text-[#0078a8]">Leaflet</span> | © <span className="text-[#0078a8]">OpenStreetMap</span> contributors
            </div>
          </div>
        </section>
      </main>
      <aside className="h-[955px] w-[470px] rounded-[5px] border-2 border-[#808080] pl-[21px] text-[#a9a9a9] shadow-[0_2px_2px_rgba(0,0,0,0.25)]">
        <h3 className="mt-[19px] [font-family:'DejaVu_Sans_Condensed','DejaVu_Sans',sans-serif] text-[23.4px] font-bold leading-[32px]">Live cases</h3>
        <div className="mt-[23px]"><CountryTable /></div>
        <h3 className="mt-[22px] [font-family:'DejaVu_Sans_Condensed','DejaVu_Sans',sans-serif] text-[23.4px] font-bold leading-[34px]">Worldwide new cases</h3>
        <div className="mt-[17px]"><CasesChart /></div>
      </aside>
    </div>
  );
}
